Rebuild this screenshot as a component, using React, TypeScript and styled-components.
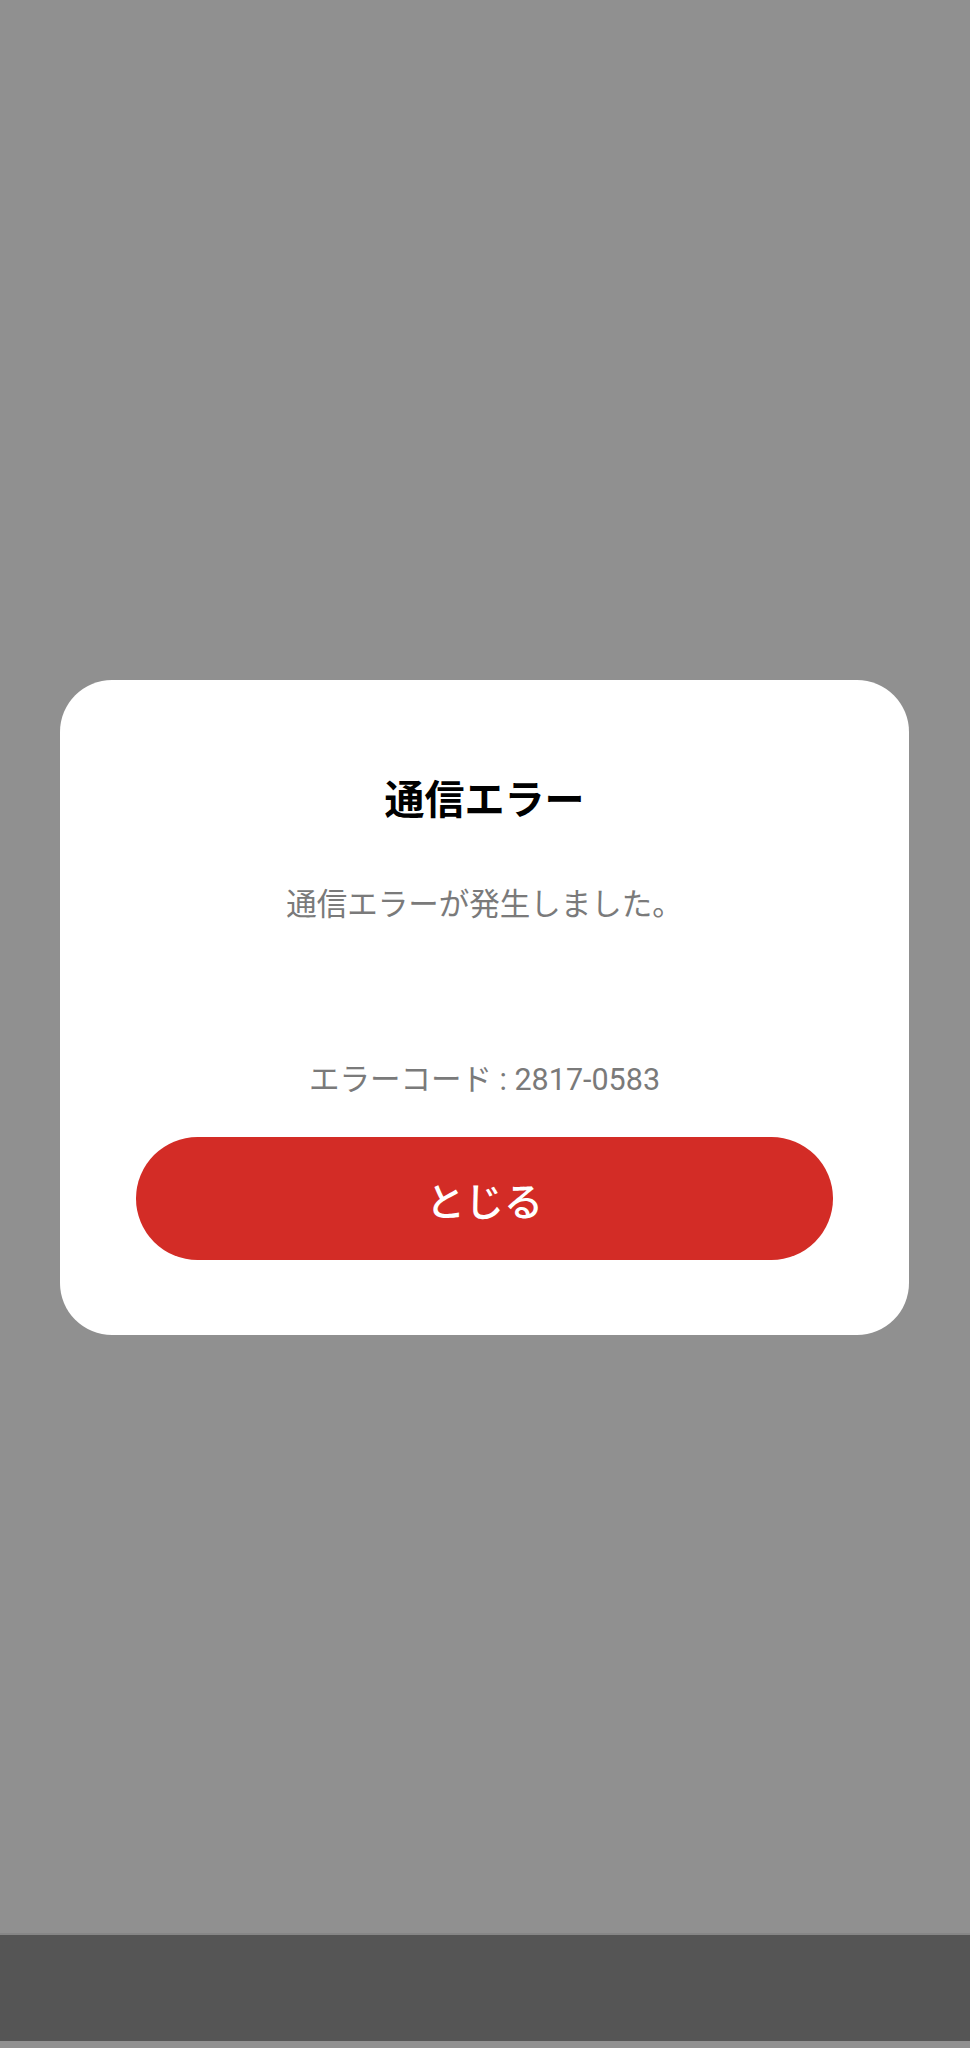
import React from "react";
import styled, { createGlobalStyle } from "styled-components";

const GlobalStyle = createGlobalStyle`
  html, body {
    margin: 0;
    padding: 0;
    background: #909090;
  }
  body {
    font-family: Roboto, "Noto Sans CJK JP", sans-serif;
  }
`;

const App = () => {
  return (
    <Screen>
      <GlobalStyle />
      <Overlay>
        <Dialog>
          <Title>通信エラー</Title>
          <Message>通信エラーが発生しました。</Message>
          <ErrorCode>エラーコード : 2817-0583</ErrorCode>
          <CloseButton type="button">とじる</CloseButton>
        </Dialog>
      </Overlay>
      <NavBar />
    </Screen>
  );
};

export default App;

const Screen = styled.div`
  width: 970px;
  height: 2048px;
  display: flex;
  flex-direction: column;
  background: #909090;
`;

const Overlay = styled.div`
  height: 1935px;
  padding: 680px 61px 0 60px;
  box-sizing: border-box;
  border-bottom: 2px solid #868686;
`;

const Dialog = styled.div`
  background: #ffffff;
  border-radius: 52px;
  padding: 97px 76px 75px;
  display: flex;
  flex-direction: column;
  align-items: center;
`;

const Title = styled.div`
  font-size: 40px;
  line-height: 48px;
  font-weight: 700;
  color: #000000;
`;

const Message = styled.div`
  margin-top: 59px;
  font-size: 30.5px;
  line-height: 42px;
  color: #7a7a7a;
`;

const ErrorCode = styled.div`
  margin-top: 133px;
  font-size: 30.5px;
  line-height: 42px;
  color: #7a7a7a;
`;

const CloseButton = styled.button`
  margin-top: 36px;
  width: 100%;
  height: 123px;
  border: none;
  border-radius: 62px;
  background: #d32c26;
  color: #ffffff;
  font-family: Roboto, "Noto Sans CJK JP", sans-serif;
  font-size: 39px;
  font-weight: 500;
  cursor: pointer;
`;

const NavBar = styled.div`
  height: 106px;
  background: #555555;
`;
